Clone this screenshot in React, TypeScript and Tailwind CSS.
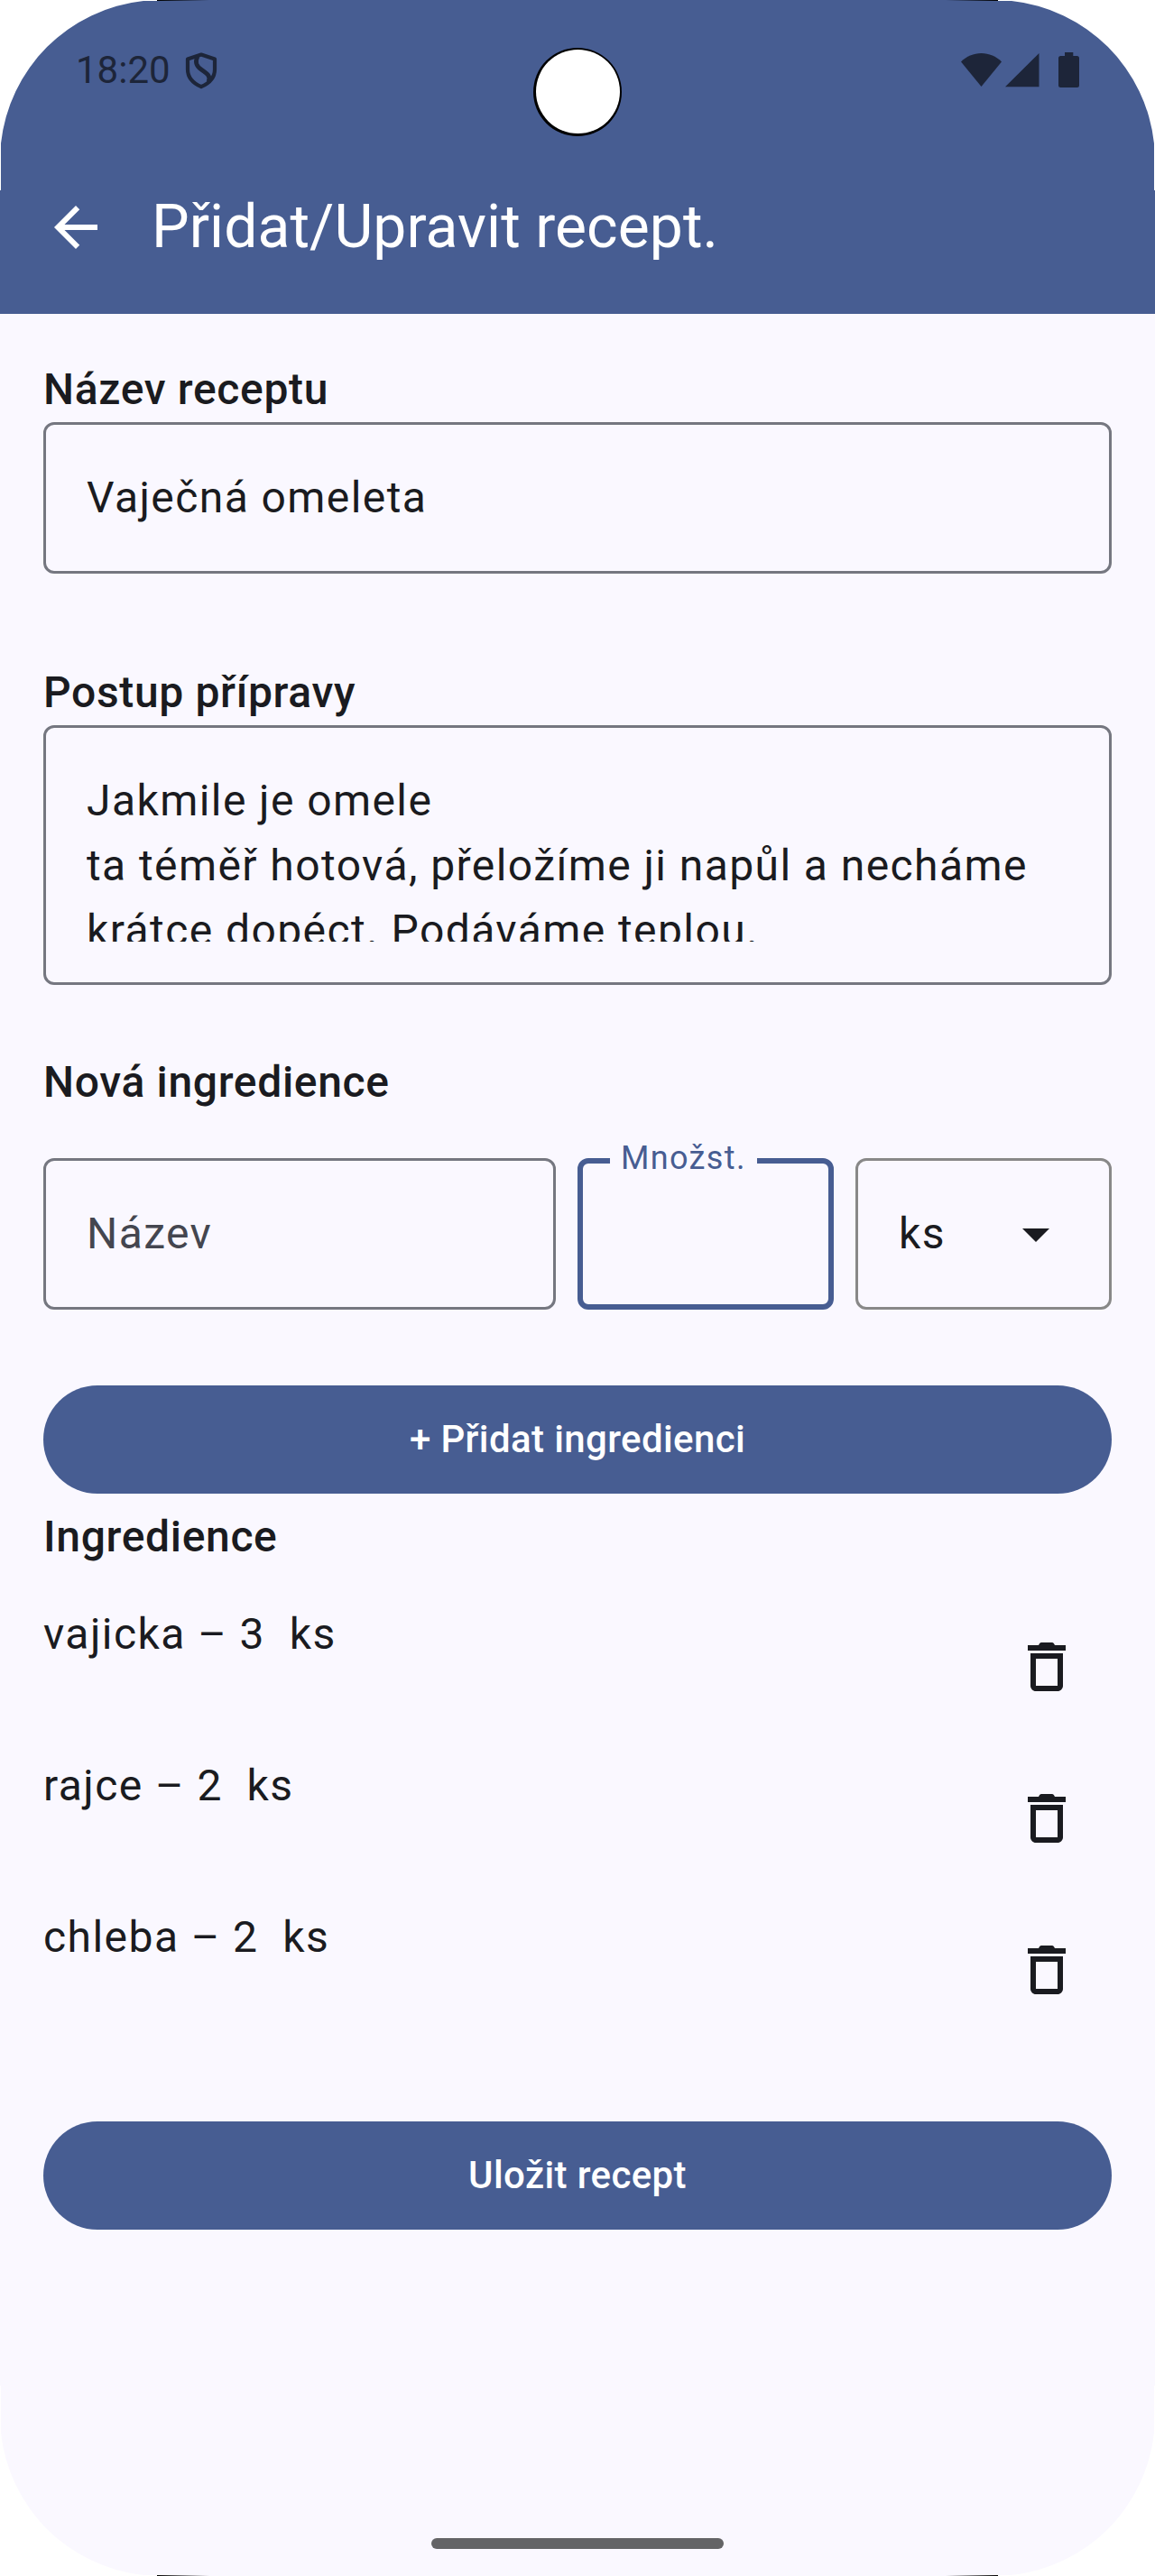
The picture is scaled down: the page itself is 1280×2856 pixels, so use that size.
import type { ReactNode } from "react";

const ingredients = ["vajicka – 3  ks", "rajce – 2  ks", "chleba – 2  ks"];

function ScreenCorner({ className }: { className: string }) {
  return (
    <div className={`pointer-events-none absolute h-[232px] w-[232px] ${className}`}>
      <svg className="h-full w-full" viewBox="0 0 232 232">
        <path d="M0 0H174V1H159A178 178 0 0 0 1 159V211H0Z" fill="#fff" />
      </svg>
      <div className="absolute top-0 right-0 h-px w-[58px] bg-linear-to-r from-black to-transparent" />
    </div>
  );
}

function StatusBar() {
  return (
    <div className="relative flex h-[156px] items-start justify-between pt-[48px] pr-[83px] pl-[84px] text-[#1d2539]">
      <div className="flex h-[60px] items-center">
        <span className="text-[42px] leading-[60px]">18:20</span>
        <svg className="ml-[15px] h-[42px] w-[38px]" viewBox="0 0 38 42" fill="none">
          <path
            d="M19 3.500L34 8.500V20C34 28 28.500 35 19 39.200C9.500 35 4 28 4 20V8.500Z"
            stroke="currentColor"
            strokeWidth="4.200"
            strokeLinejoin="round"
          />
          <path
            d="M15 5.500C11.500 12.500 14 16.500 19 20C25.500 24.500 30 27.500 27 33.500"
            stroke="currentColor"
            strokeWidth="4.800"
          />
        </svg>
      </div>
      <div className="absolute top-[53px] left-[591px] flex h-[98px] w-[98px] justify-center rounded-full bg-black pt-[2px]">
        <div className="h-[93px] w-[93px] rounded-full bg-white" />
      </div>
      <svg className="mt-[8px] h-[44px] w-[134px]" viewBox="1063 56 134 44" fill="currentColor">
        <path d="M1087.500 96L1065 68.500C1071 62.500 1079 59 1087.500 59S1104 62.500 1110 68.500Z" />
        <path d="M1114 96.300L1151.500 59V96.300Z" />
        <path d="M1180 58H1189.300V62H1193.500Q1196 62 1196 64.500V94.500Q1196 97 1193.500 97H1175.500Q1173 97 1173 94.500V64.500Q1173 62 1175.500 62H1180Z" />
      </svg>
    </div>
  );
}

function Label({ children, className = "" }: { children: ReactNode; className?: string }) {
  return (
    <h2 className={`text-[48px] leading-[72px] font-medium tracking-[0.66px] ${className}`}>
      {children}
    </h2>
  );
}

function Button({ children, className = "" }: { children: ReactNode; className?: string }) {
  return (
    <button
      className={`flex h-[120px] w-full shrink-0 items-center justify-center rounded-full bg-[#475d92] text-[42px] leading-[60px] font-medium tracking-[0.38px] text-white ${className}`}
    >
      {children}
    </button>
  );
}

export default function App() {
  return (
    <div className="relative flex h-[2856px] w-[1280px] flex-col overflow-hidden bg-[#faf8ff] font-['Roboto',sans-serif] text-[#1a1b20]">
      <header className="h-[348px] shrink-0 bg-[#475d92]">
        <StatusBar />
        <div className="flex h-[192px] items-center px-[48px] text-white">
          <svg className="h-[72px] w-[72px]" viewBox="0 0 24 24" fill="currentColor">
            <path d="M20 11H7.830l5.590-5.590L12 4l-8 8 8 8 1.410-1.410L7.830 13H20v-2z" />
          </svg>
          <h1 className="ml-[48px] text-[66px] leading-[84px] tracking-[0.06px]">Přidat/Upravit recept.</h1>
        </div>
      </header>

      <main className="flex flex-1 flex-col px-[48px] pt-[48px]">
        <Label>Název receptu</Label>
        <div className="h-[168px] rounded-[12px] border-[3px] border-[#757780] p-[45px] text-[48px] leading-[72px] tracking-[1.42px]">
          Vaječná omeleta
        </div>

        <Label className="mt-[96px]">Postup přípravy</Label>
        <div className="h-[288px] rounded-[12px] border-[3px] border-[#757780] p-[45px]">
          <div className="h-[192px] overflow-hidden text-[48px] leading-[72px] tracking-[1.42px] whitespace-pre">
            {"Jakmile je omele\nta téměř hotová, přeložíme ji napůl a necháme\nkrátce dopéct. Podáváme teplou."}
          </div>
        </div>

        <Label className="mt-[72px]">Nová ingredience</Label>
        <div className="mt-[48px] grid grid-cols-[2fr_1fr_1fr] gap-[24px] text-[48px] leading-[72px] tracking-[1.42px]">
          <div className="h-[168px] rounded-[12px] border-[3px] border-[#757780] p-[45px] text-[#44464f]">
            Název
          </div>
          <div className="relative h-[168px] rounded-[12px] border-[6px] border-[#475d92]">
            <span className="absolute -top-[30px] left-[30px] w-[163px] bg-[#faf8ff] px-[12px] text-[36px] leading-[48px] tracking-[1.35px] text-[#475d92]">
              Množst.
            </span>
          </div>
          <div className="flex h-[168px] items-center justify-between rounded-[12px] border-[3px] border-[#888888] px-[45px]">
            <span>ks</span>
            <svg className="h-[72px] w-[72px]" viewBox="0 0 24 24" fill="currentColor">
              <path d="M7 10l5 5 5-5z" />
            </svg>
          </div>
        </div>

        <Button className="mt-[84px]">+ Přidat ingredienci</Button>

        <Label className="mt-[12px]">Ingredience</Label>
        <ul className="mt-[36px] flex flex-col gap-[24px]">
          {ingredients.map((item) => (
            <li key={item} className="flex h-[144px] items-start justify-between">
              <span className="text-[48px] leading-[72px] tracking-[1.45px] whitespace-pre">{item}</span>
              <button className="flex h-[144px] w-[144px] items-center justify-center">
                <svg className="h-[72px] w-[72px]" viewBox="0 0 24 24" fill="currentColor">
                  <path d="M6 19c0 1.100.900 2 2 2h8c1.100 0 2-.900 2-2V7H6v12zM8 9h8v10H8V9zm7-5c-.300-.700-.600-1-1-1h-4c-.400 0-.700.300-1 1H5v2h14V4z" />
                </svg>
              </button>
            </li>
          ))}
        </ul>

        <Button className="mt-[96px]">Uložit recept</Button>
        <div className="mt-auto mb-[30px] h-[12px] w-[324px] shrink-0 self-center rounded-full bg-[#646466]" />
      </main>

      <ScreenCorner className="top-0 left-0" />
      <ScreenCorner className="top-0 right-0 -scale-x-100" />
      <ScreenCorner className="bottom-0 left-0 -scale-y-100" />
      <ScreenCorner className="right-0 bottom-0 -scale-100" />
    </div>
  );
}
